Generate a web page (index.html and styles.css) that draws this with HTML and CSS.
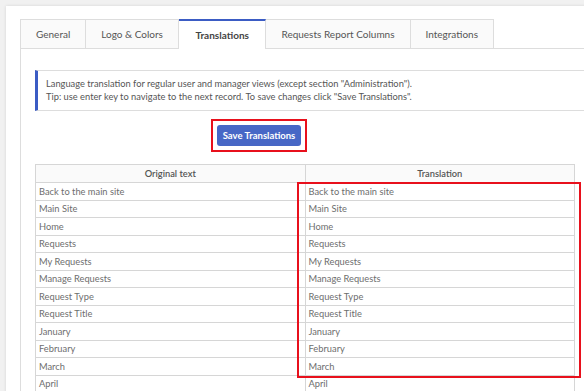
FILE: index.html
```html
<!DOCTYPE html>
<html lang="en">
<head>
  <meta charset="UTF-8" />
  <title>Settings - Translations</title>
  <link rel="stylesheet" href="styles.css">
</head>
<body>
  <div class="card">
    <div class="tabs">
      <div class="tab">General</div>
      <div class="tab">Logo &amp; Colors</div>
      <div class="tab active">Translations</div>
      <div class="tab">Requests Report Columns</div>
      <div class="tab">Integrations</div>
    </div>

    <div class="tab-content">
      <div class="info">
        Language translation for regular user and manager views (except section "Administration").<br>
        Tip: use enter key to navigate to the next record. To save changes click "Save Translations".
      </div>

      <div class="actions">
        <div class="mark">
          <button class="btn-save">Save Translations</button>
        </div>
      </div>

      <div class="table-wrap">
        <table class="tr-table">
          <thead>
            <tr><th>Original text</th><th>Translation</th></tr>
          </thead>
          <tbody id="rows"></tbody>
        </table>
        <div class="mark-col"></div>
      </div>
    </div>
  </div>

  <script>
    const words = ["Back to the main site", "Main Site", "Home", "Requests", "My Requests",
      "Manage Requests", "Request Type", "Request Title", "January", "February", "March", "April"];
    const body = document.getElementById("rows");
    words.forEach(w => {
      const tr = document.createElement("tr");
      tr.innerHTML = `<td>${w}</td><td>${w}</td>`;
      body.appendChild(tr);
    });
  </script>
</body>
</html>
```

FILE: styles.css
```css
html, body {
  margin: 0;
  height: 391px;
  overflow: hidden;
}
body {
  background: #f1f1f1;
  font-family: 'Lato', sans-serif;
  font-size: 9.3px;
  color: #666;
  padding: 6px 0 0 6px;
  box-sizing: border-box;
}
.card {
  background: #fff;
  box-shadow: 0 0 3px rgba(0,0,0,0.12);
  margin-right: -40px;
  padding: 13px 0 0 14px;
  height: 400px;
  box-sizing: border-box;
}
.tabs {
  display: flex;
  border-bottom: 1px solid #ddd;
  height: 29px;
}
.tab {
  display: flex;
  align-items: center;
  justify-content: center;
  padding: 0 15px;
  background: #fafafa;
  border: 1px solid #ddd;
  border-bottom: none;
  border-left: none;
  font-size: 10px;
  color: #555;
}
.tab:first-child { border-left: 1px solid #ddd; }
.tab.active {
  background: #fff;
  border-top: 2px solid #3b5cc4;
  margin-bottom: -1px;
  padding: 0 16.5px;
  font-weight: 700;
  color: #444;
}
.tab-content {
  border-left: 1px solid #ddd;
  padding: 21px 0 0 14px;
  height: 100%;
}
.info {
  border: 1px solid #ddd;
  border-left: 3px solid #3b5cc4;
  border-right: none;
  padding: 6px 0 7px 8px;
  line-height: 13px;
  color: #555;
}
.actions {
  padding: 8px 0 0 176px;
}
.mark {
  display: inline-block;
  border: 2px solid #e8101c;
  padding: 4px;
}
.btn-save {
  display: block;
  width: 84px;
  height: 21px;
  background: #4767c6;
  color: #fff;
  border: none;
  border-radius: 3px;
  font-family: inherit;
  font-size: 9.5px;
  font-weight: 700;
  white-space: nowrap;
  padding: 0;
}
.table-wrap {
  position: relative;
  width: 540px;
  margin-top: 12px;
}
.tr-table {
  width: 540px;
  border-collapse: collapse;
}
.tr-table th, .tr-table td {
  border: 1px solid #d6d6d6;
  height: 16.5px;
  padding: 0 3px;
  text-align: left;
  width: 50%;
  color: #6e6e6e;
}
.tr-table th {
  background: #fafafa;
  text-align: center;
  font-weight: 600;
  color: #555;
  height: 17px;
}
.mark-col {
  position: absolute;
  left: 262px;
  top: 18px;
  width: 280px;
  height: 192px;
  border: 2px solid #e8101c;
}
```
